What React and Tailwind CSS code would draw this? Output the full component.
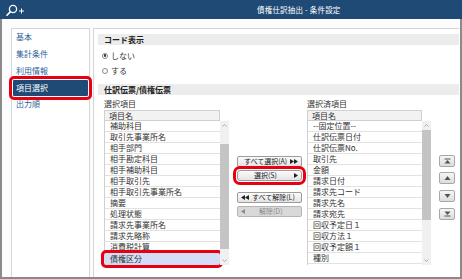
import React from "react";

const font = { fontFamily: '"Noto Sans CJK JP", "Noto Sans", sans-serif' };

const navItems = ["基本", "集計条件", "利用情報", "項目選択", "出力順"];

const leftItems = [
  "補助科目",
  "取引先事業所名",
  "相手部門",
  "相手勘定科目",
  "相手補助科目",
  "相手取引先",
  "相手取引先事業所名",
  "摘要",
  "処理状態",
  "請求先事業所名",
  "請求先略称",
  "消費税計算",
];

const rightItems = [
  "仕訳伝票日付",
  "仕訳伝票No.",
  "取引先",
  "金額",
  "請求日付",
  "請求先コード",
  "請求先名",
  "請求宛先",
  "回収予定日１",
  "回収方法１",
  "回収予定額１",
  "種別",
];

function Chevron({ up }) {
  return (
    <svg width="5" height="3" viewBox="0 0 5 3" className="block">
      <path
        d={up ? "M0.5 2.5 L2.5 0.5 L4.5 2.5" : "M0.5 0.5 L2.5 2.5 L4.5 0.5"}
        fill="none"
        stroke="#9a9a9a"
        strokeWidth="0.8"
      />
    </svg>
  );
}

function Scrollbar({ gap, thumb }) {
  return (
    <div className="w-[9px] bg-[#f0f0f0] flex flex-col items-center">
      <div className="h-[9px] flex items-center justify-center">
        <Chevron up />
      </div>
      <div style={{ height: gap }} />
      <div className="w-full bg-[#c4c4c4]" style={{ height: thumb }} />
      <div className="flex-1" />
      <div className="h-[9px] flex items-center justify-center">
        <Chevron />
      </div>
    </div>
  );
}

function Row({ children, className = "" }) {
  return (
    <div
      className={`h-[11px] leading-[10px] border-b border-[#e2e2e2] pl-[5px] text-[8px] text-[#333] whitespace-nowrap overflow-hidden ${className}`}
    >
      {children}
    </div>
  );
}

function ListHeader() {
  return (
    <div className="h-[11px] leading-[10px] border border-[#d0d0d0] bg-[#f2f2f2] pl-[4px] text-[8px] text-[#333]">
      項目名
    </div>
  );
}

function ActionButton({ children, disabled, className = "" }) {
  return (
    <div
      className={`h-[11px] rounded-[2px] border text-[7px] leading-[9px] whitespace-nowrap flex items-center px-[3px] ${
        disabled
          ? "border-[#b5b5b5] bg-[#d9d9d9] text-[#8c8c8c]"
          : "border-[#9c9c9c] bg-gradient-to-b from-[#fbfbfb] to-[#e4e4e4] text-[#222]"
      } ${className}`}
    >
      {children}
    </div>
  );
}

function Tri({ dir, color = "#222" }) {
  return (
    <svg width="4" height="5" viewBox="0 0 4 5" className="block">
      <path d={dir === "r" ? "M0 0 L4 2.5 L0 5 Z" : "M4 0 L0 2.5 L4 5 Z"} fill={color} />
    </svg>
  );
}

function MoveButton({ type }) {
  return (
    <div className="w-[16px] h-[12px] rounded-[2px] border border-[#a8a8a8] bg-gradient-to-b from-[#f6f6f6] to-[#dcdcdc] flex items-center justify-center">
      <svg width="7" height="6" viewBox="0 0 7 6">
        {type === "top" && (
          <>
            <rect x="0.5" y="0.5" width="6" height="1" fill="#555" />
            <path d="M0.5 5.5 L3.5 2 L6.5 5.5 Z" fill="#555" />
          </>
        )}
        {type === "up" && <path d="M0.5 5 L3.5 1 L6.5 5 Z" fill="#555" />}
        {type === "down" && <path d="M0.5 1 L3.5 5 L6.5 1 Z" fill="#555" />}
        {type === "bottom" && (
          <>
            <path d="M0.5 0.5 L3.5 4 L6.5 0.5 Z" fill="#555" />
            <rect x="0.5" y="4.5" width="6" height="1" fill="#555" />
          </>
        )}
      </svg>
    </div>
  );
}

export default function App() {
  return (
    <div className="w-[462px] h-[279px] flex flex-col bg-white overflow-hidden" style={font}>
      {/* title bar */}
      <div className="h-[19px] bg-[#1e4a75] flex items-center shrink-0">
        <svg width="22" height="16" viewBox="0 0 22 16" className="ml-[3px]">
          <circle cx="10" cy="7" r="3.6" fill="none" stroke="#fff" strokeWidth="1.3" />
          <path d="M7.4 9.6 L4 13.2" stroke="#fff" strokeWidth="1.6" strokeLinecap="round" />
          <path d="M16 9 H21 M18.5 6.5 V11.5" stroke="#fff" strokeWidth="1" />
        </svg>
        <div className="ml-[232px] text-[7.5px] text-white tracking-[0.2px]">債権仕訳抽出 - 条件設定</div>
      </div>

      {/* body */}
      <div className="flex-1 flex border-x-2 border-b-2 border-[#8a8a8a] bg-[#fcfcfc] pt-[9px] pl-[9px] pr-[1px]">
        {/* sidebar */}
        <div className="w-[79px] border border-[#d6d6d6] border-b-0 bg-white flex flex-col">
          {navItems.map((item) =>
            item === "項目選択" ? (
              <div
                key={item}
                className="h-[16px] mx-[1px] my-[0.5px] bg-[#1e4a75] text-white text-[8px] flex items-center pl-[3px] rounded-[1px] outline-[3px] outline-solid outline-[#e60012] outline-offset-[1px]"
              >
                {item}
              </div>
            ) : (
              <div key={item} className="h-[16.7px] flex items-center pl-[4px] text-[8px] text-[#2f5f96]">
                {item}
              </div>
            )
          )}
        </div>

        {/* main panel */}
        <div className="flex-1 ml-[3px] border-t border-l border-[#d6d6d6] bg-white pl-[4px] pt-[5px] flex flex-col">
          <div className="h-[11px] bg-[#ececec] pl-[6px] text-[8px] font-bold leading-[11px] text-[#222]">
            コード表示
          </div>
          <div className="pl-[4px] pt-[6px] flex flex-col gap-[6px] text-[8px] text-[#333]">
            <div className="flex items-center h-[9px] gap-[3px]">
              <span className="w-[6px] h-[6px] rounded-full border border-[#888] flex items-center justify-center">
                <span className="w-[2.5px] h-[2.5px] rounded-full bg-[#333]" />
              </span>
              しない
            </div>
            <div className="flex items-center h-[9px] gap-[3px]">
              <span className="w-[6px] h-[6px] rounded-full border border-[#888]" />
              する
            </div>
          </div>
          <div className="mt-[9px] h-[11px] bg-[#ececec] pl-[6px] text-[8px] font-bold leading-[11px] text-[#222]">
            仕訳伝票/債権伝票
          </div>

          <div className="flex pl-[6px] pt-[3px]">
            {/* left list */}
            <div className="w-[125px] flex flex-col">
              <div className="h-[12px] text-[8px] leading-[12px] text-[#333]">選択項目</div>
              <div className="w-[116px]">
                <ListHeader />
              </div>
              <div className="flex h-[144px]">
                <div className="w-[116px] border-l border-[#d0d0d0] flex flex-col">
                  {leftItems.map((t) => (
                    <Row key={t}>{t}</Row>
                  ))}
                  <div className="h-[12px] -ml-[1px] bg-[#d3ddf5] text-[8px] leading-[12px] pl-[6px] text-[#333] rounded-[2px] outline-[3px] outline-solid outline-[#e60012]">
                    債権区分
                  </div>
                </div>
                <Scrollbar gap={14} thumb={105} />
              </div>
            </div>

            {/* center buttons */}
            <div className="w-[65px] ml-[8px] pt-[58px] flex flex-col">
              <ActionButton className="justify-between pl-[6px]">
                <span>すべて選択(A)</span>
                <span className="flex">
                  <Tri dir="r" />
                  <Tri dir="r" />
                </span>
              </ActionButton>
              <ActionButton className="mt-[3px] justify-between pl-[16px] outline-[3px] outline-solid outline-[#e60012] outline-offset-[1px] rounded-[3px]">
                <span>選択(S)</span>
                <Tri dir="r" />
              </ActionButton>
              <ActionButton className="mt-[11px] gap-[3px]">
                <span className="flex">
                  <Tri dir="l" />
                  <Tri dir="l" />
                </span>
                <span>すべて解除(L)</span>
              </ActionButton>
              <ActionButton disabled className="mt-[3px] gap-[14px]">
                <Tri dir="l" color="#8c8c8c" />
                <span>解除(D)</span>
              </ActionButton>
            </div>

            {/* right list */}
            <div className="w-[124px] ml-[5px] flex flex-col">
              <div className="h-[12px] text-[8px] leading-[12px] text-[#333]">選択済項目</div>
              <div className="w-[115px]">
                <ListHeader />
              </div>
              <div className="flex h-[144px]">
                <div className="w-[115px] border-l border-[#d0d0d0] flex flex-col">
                  <Row className="text-[#3a9e3a]">--固定位置--</Row>
                  {rightItems.map((t) => (
                    <Row key={t}>{t}</Row>
                  ))}
                </div>
                <Scrollbar gap={0} thumb={90} />
              </div>
            </div>

            {/* move buttons */}
            <div className="ml-[8px] pt-[57px] flex flex-col gap-[5px]">
              <MoveButton type="top" />
              <MoveButton type="up" />
              <div className="mt-[1px]">
                <MoveButton type="down" />
              </div>
              <div className="mt-[1px]">
                <MoveButton type="bottom" />
              </div>
            </div>
          </div>
        </div>
      </div>
    </div>
  );
}
